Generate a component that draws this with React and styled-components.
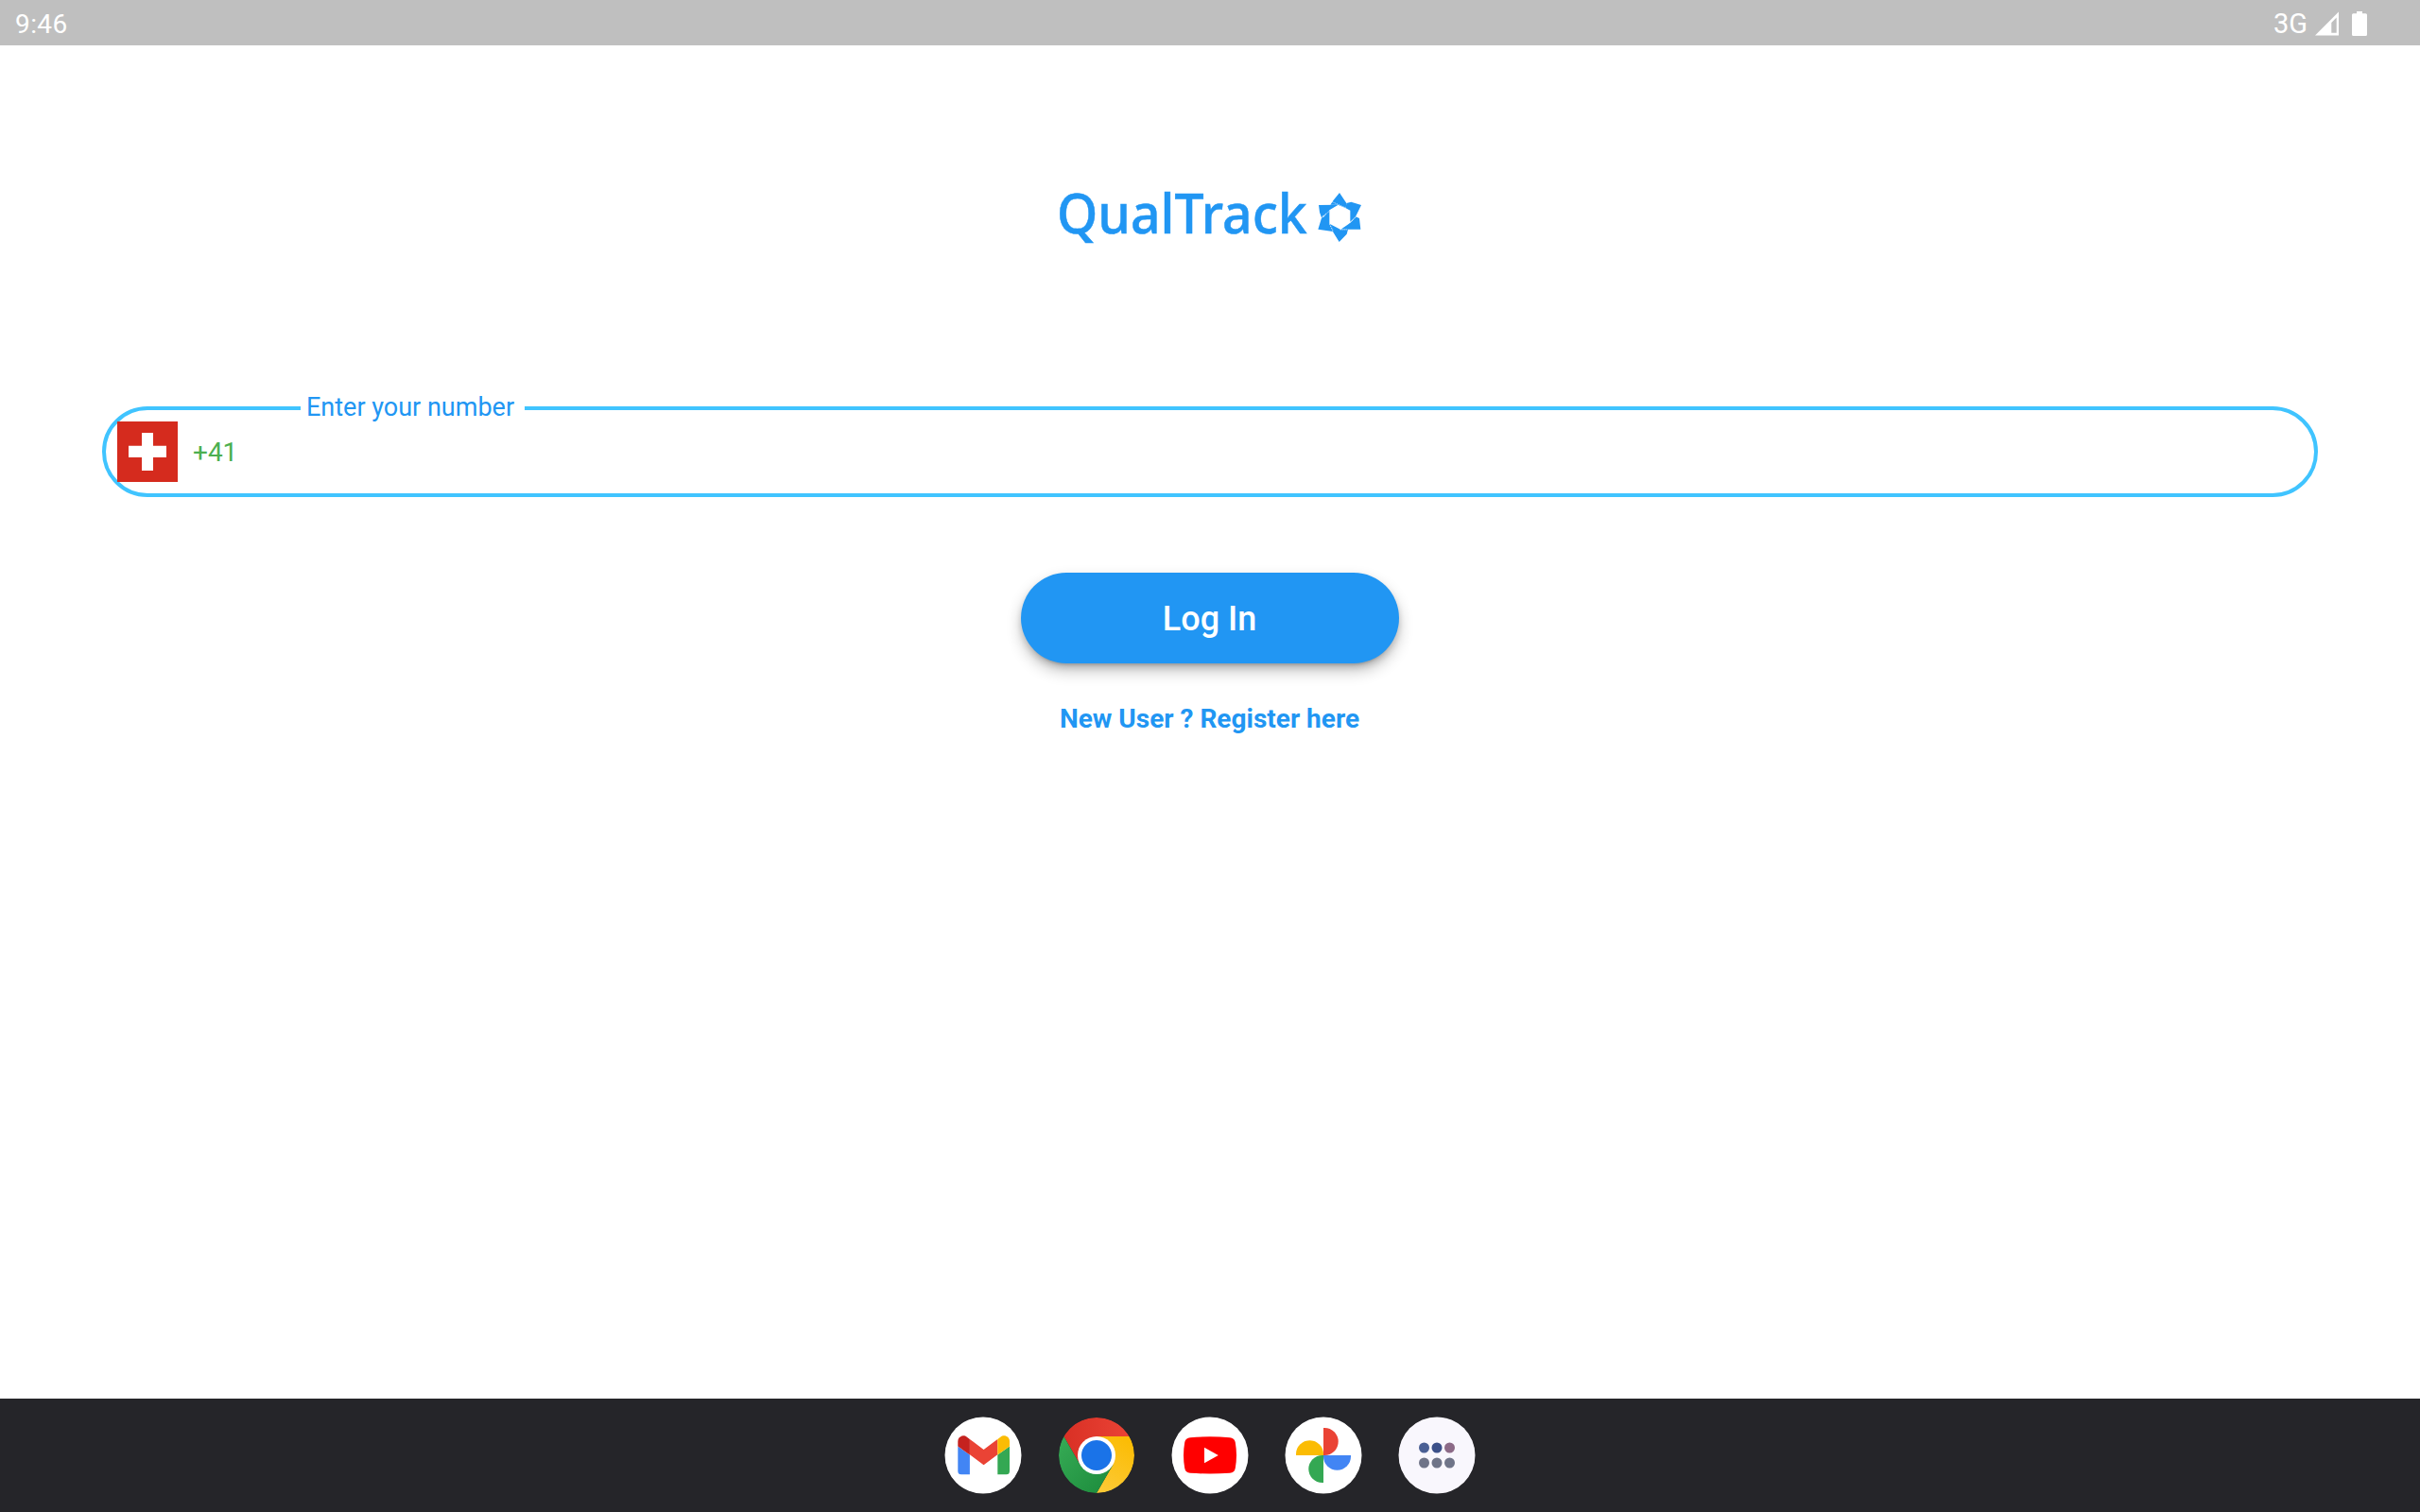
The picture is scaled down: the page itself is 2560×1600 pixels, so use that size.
import React from "react";
import styled, { createGlobalStyle } from "styled-components";

const GlobalStyle = createGlobalStyle`
  * { box-sizing: border-box; }
  body { margin: 0; background: #fff; font-family: Roboto, "Noto Sans", sans-serif; }
`;

const Screen = styled.div`
  width: 2560px;
  height: 1600px;
  display: flex;
  flex-direction: column;
  overflow: hidden;
  background: #fff;
`;

const StatusBar = styled.header`
  height: 48px;
  flex: none;
  display: flex;
  align-items: center;
  justify-content: space-between;
  padding: 2px 56px 0 16px;
  background: #bfbfbf;
  color: #fff;
  font-size: 28px;
  line-height: 46px;
`;

const Clock = styled.span`
  padding-top: 2px;
  letter-spacing: 0.4px;
`;

const StatusIcons = styled.div`
  display: flex;
  align-items: center;
  height: 46px;
`;

const Network = styled.span`
  margin-right: 8px;
  font-size: 29px;
  letter-spacing: 0;
`;

const StatusGlyph = styled.svg`
  display: block;
  width: ${(p) => p.$w}px;
  height: 26px;
  margin-left: ${(p) => p.$gap || 0}px;
  fill: #fff;
`;

const Content = styled.main`
  flex: 1;
  display: flex;
  flex-direction: column;
  align-items: center;
  padding: 150px 108px 0;
`;

const Brand = styled.div`
  width: 324px;
  height: 64px;
  display: flex;
  align-items: center;
  justify-content: space-between;
  padding-right: 2px;
  color: #2196f3;
`;

const BrandName = styled.span`
  width: 270px;
  padding-bottom: 10px;
  font-family: "Noto Sans", sans-serif;
  font-weight: 500;
  font-size: 58px;
  line-height: 64px;
  white-space: nowrap;
  -webkit-text-stroke: 0.5px currentColor;
  transform: scaleX(0.953);
  transform-origin: 0 50%;
`;

const BrandMark = styled.svg`
  width: 46px;
  height: 52px;
  flex: none;
  fill: currentColor;
`;

const PhoneField = styled.fieldset`
  width: 100%;
  height: 110px;
  margin: 154px 0 0;
  padding: 0 12px;
  border: 4px solid #40c4ff;
  border-radius: 48px;
  min-width: 0;
`;

const PhoneLabel = styled.legend`
  width: 237px;
  height: 32px;
  margin-left: 194px;
  padding: 0 0 0 6px;
  color: #2196f3;
  font-size: 27px;
  line-height: 30px;
  white-space: nowrap;
`;

const PhoneRow = styled.div`
  height: 64px;
  display: flex;
  align-items: center;
  gap: 16px;
  margin-top: -2px;
`;

const Flag = styled.svg`
  width: 64px;
  height: 64px;
  display: block;
`;

const DialCode = styled.span`
  padding-top: 2px;
  color: #4caf50;
  font-size: 28px;
  line-height: 34px;
`;

const LoginButton = styled.button`
  width: 400px;
  height: 96px;
  margin-top: 80px;
  padding: 2px 1px 0 0;
  border: 0;
  border-radius: 48px;
  background: #2196f3;
  color: #fff;
  font: 500 36px/42px Roboto, sans-serif;
  box-shadow: 0 6px 2px -4px rgba(0, 0, 0, 0.1), 0 4px 6px rgba(0, 0, 0, 0.14),
    0 8px 16px rgba(0, 0, 0, 0.24);
`;

const RegisterLink = styled.a`
  margin-top: 42px;
  padding-right: 1px;
  color: #2196f3;
  font-size: 28px;
  font-weight: 700;
  line-height: 34px;
`;

const Shelf = styled.nav`
  height: 120px;
  flex: none;
  display: flex;
  align-items: center;
  justify-content: center;
  gap: 40px;
  background: #252529;
`;

const AppIcon = styled.svg`
  display: block;
  width: 80px;
  height: 80px;
  border-radius: 50%;
  background: ${(p) => p.$bg || "#fff"};
  box-shadow: 0 0 0 0.5px ${(p) => p.$bg || "#fff"};
`;

const Gmail = () => (
  <AppIcon viewBox="0 0 80 80">
    <path d="M13.3 30.5 25.9 39.5V60.3H16.8Q13.3 60.3 13.3 56.8Z" fill="#4285f4" />
    <path d="M68 30.5 55.3 39.5V60.3H64.5Q68 60.3 68 56.8Z" fill="#34a853" />
    <path d="M25.9 22.9 40.6 34 55.3 22.9V39.2L40.6 50.2 25.9 39.2Z" fill="#ea4335" />
    <path d="M13.3 30.5V25.2C13.3 20 19 17.6 22.9 20.7L25.9 22.9V39.5Z" fill="#c5221f" />
    <path d="M68 30.5V25.2C68 20 62.2 17.6 58.3 20.7L55.3 22.9V39.5Z" fill="#fbbc04" />
  </AppIcon>
);

const Chrome = () => (
  <AppIcon viewBox="0 0 80 80" $bg="transparent">
    <defs>
      <linearGradient id="chromeRed" x1="0" y1="0" x2="1" y2="0">
        <stop offset="0" stopColor="#d93025" />
        <stop offset="1" stopColor="#ea4335" />
      </linearGradient>
      <linearGradient id="chromeGreen" x1="0.9" y1="0.9" x2="0.1" y2="0.1">
        <stop offset="0" stopColor="#1e8e3e" />
        <stop offset="1" stopColor="#34a853" />
      </linearGradient>
      <linearGradient id="chromeYellow" x1="0.3" y1="1" x2="0.7" y2="0">
        <stop offset="0" stopColor="#fcc934" />
        <stop offset="1" stopColor="#fbbc04" />
      </linearGradient>
    </defs>
    <path d="M5.36 20A40 40 0 0 1 74.64 20H40L22.68 50Z" fill="url(#chromeRed)" />
    <path d="M74.64 20A40 40 0 0 1 40 80L57.32 50 40 20Z" fill="url(#chromeYellow)" />
    <path d="M5.36 20A40 40 0 0 0 40 80L57.32 50H22.68Z" fill="url(#chromeGreen)" />
    <circle cx="40" cy="40" r="20" fill="#fff" />
    <circle cx="40" cy="40" r="16" fill="#1a73e8" />
  </AppIcon>
);

const YouTube = () => (
  <AppIcon viewBox="0 0 80 80">
    <path
      d="M19 21.2Q40 19.4 61 21.2Q66 21.6 66.8 26.5Q69.2 40 66.8 53.5Q66 58.4 61 58.8Q40 60.2 19 58.8Q14 58.4 13.2 53.5Q10.8 40 13.2 26.5Q14 21.6 19 21.2Z"
      fill="#f00"
    />
    <path d="M34 31.7 48.8 40 34 48.3Z" fill="#fff" />
  </AppIcon>
);

const Photos = () => (
  <AppIcon viewBox="0 0 80 80">
    <path d="M40 11H41.2A14.5 14.5 0 0 1 41.2 40H40Z" fill="#ea4335" />
    <path d="M69 40V41.3A14.5 14.5 0 0 1 40 41.3V40Z" fill="#4285f4" />
    <path d="M40 69H38.8A14.5 14.5 0 0 1 38.8 40H40Z" fill="#34a853" />
    <path d="M11 40V38.7A14.5 14.5 0 0 1 40 38.7V40Z" fill="#fbbc04" />
  </AppIcon>
);

const drawerDots = [
  [26.5, 32, "#4a5f94"],
  [40, 32, "#3c5089"],
  [53.5, 32, "#8c6a87"],
  [26.5, 48, "#6f7488"],
  [40, 48, "#6f7488"],
  [53.5, 48, "#6f7488"],
];

const AppDrawer = () => (
  <AppIcon viewBox="0 0 80 80" $bg="#f9f7fd">
    {drawerDots.map(([x, y, fill]) => (
      <circle key={`${x}-${y}`} cx={x} cy={y} r="5.5" fill={fill} />
    ))}
  </AppIcon>
);

const Logo = () => (
  <Brand>
    <BrandName>QualTrack</BrandName>
    <BrandMark viewBox="42 42 138 156">
      <path d="M111 42 133 75 131 91 106 80 82 80 92 65Z" />
      <path d="M133 75 148 71 180 81 162 118 145 134V98L131 91Z" />
      <path d="M163 118 174 123 178 158H115L137 143 145 137Z" />
      <path d="M79 140 115 159 138 158 134 173 110 198 91 167Z" />
      <path d="M54 122 62 118 79 98V140L90 165 43 158Z" />
      <path d="M45 81 107 80 79 97 77 103 54 121 48 104Z" />
      <path
        d="M86 70 131 90M146 136 164 118M113 159H137M57 117 78 101M80 142 91 164"
        fill="none"
        stroke="#fff"
        strokeWidth="2.4"
        strokeDasharray="3 3"
      />
    </BrandMark>
  </Brand>
);

export default function App() {
  return (
    <Screen>
      <GlobalStyle />
      <StatusBar>
        <Clock>9:46</Clock>
        <StatusIcons>
          <Network>3G</Network>
          <StatusGlyph $w={25} viewBox="0 0 25 26">
            <path fillRule="evenodd" d="M0 25.5 25 .5V25.5ZM17.3 12V22.8H22.7V6.5Z" />
          </StatusGlyph>
          <StatusGlyph $w={16} $gap={14} viewBox="0 0 16 26">
            <path d="M5 0H11V2.3H14.5Q16 2.3 16 3.8V24.5Q16 26 14.5 26H1.5Q0 26 0 24.5V3.8Q0 2.3 1.5 2.3H5Z" />
          </StatusGlyph>
        </StatusIcons>
      </StatusBar>
      <Content>
        <Logo />
        <PhoneField>
          <PhoneLabel>Enter your number</PhoneLabel>
          <PhoneRow>
            <Flag viewBox="0 0 64 64">
              <path d="M0 0H64V64H0Z" fill="#d52b1e" />
              <path d="M26 12H38V25.7H52V38H38V52H26V38H12V25.7H26Z" fill="#fff" />
            </Flag>
            <DialCode>+41</DialCode>
          </PhoneRow>
        </PhoneField>
        <LoginButton>Log In</LoginButton>
        <RegisterLink>New User ? Register here</RegisterLink>
      </Content>
      <Shelf>
        <Gmail />
        <Chrome />
        <YouTube />
        <Photos />
        <AppDrawer />
      </Shelf>
    </Screen>
  );
}
